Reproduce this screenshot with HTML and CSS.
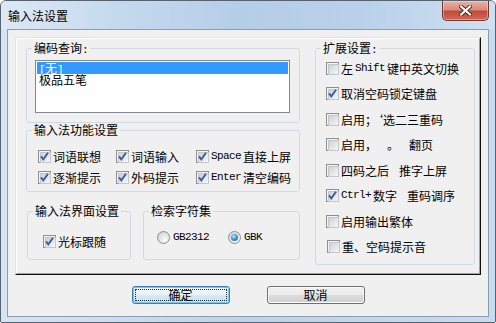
FILE: index.html
```html
<!DOCTYPE html>
<html lang="zh-CN">
<head>
<meta charset="utf-8">
<title>输入法设置</title>
<link rel="stylesheet" href="styles.css">
</head>
<body>
<div class="window">
  <div class="titlebar">
    <span class="title">输入法设置</span>
    <div class="close">
      <svg width="13" height="11" viewBox="0 0 13 11"><path d="M2 1.5 L11 9.5 M11 1.5 L2 9.5" stroke="#5a2118" stroke-width="4" stroke-linecap="square"/><path d="M2 1.5 L11 9.5 M11 1.5 L2 9.5" stroke="#fff" stroke-width="2.2" stroke-linecap="square"/></svg>
    </div>
  </div>
  <div class="client">
    <div class="panel">
      <div class="panel-inner">
        <div class="left">
          <fieldset class="grp grp-query">
            <legend>编码查询<span class="m">:</span></legend>
            <div class="query-body">
              <div class="listbox">
                <div class="item sel"><span class="m">[</span>无<span class="m">]</span></div>
                <div class="item">极品五笔</div>
              </div>
            </div>
          </fieldset>
          <fieldset class="grp grp-func">
            <legend>输入法功能设置</legend>
            <div class="func-grid">
              <label class="opt"><span class="cb on"><svg viewBox="0 0 13 13"><path d="M3 6.3 L5.3 9.3 L10 2.8"/></svg></span>词语联想</label>
              <label class="opt"><span class="cb on"><svg viewBox="0 0 13 13"><path d="M3 6.3 L5.3 9.3 L10 2.8"/></svg></span>词语输入</label>
              <label class="opt"><span class="cb on"><svg viewBox="0 0 13 13"><path d="M3 6.3 L5.3 9.3 L10 2.8"/></svg></span><span class="m">Space</span>直接上屏</label>
              <label class="opt"><span class="cb on"><svg viewBox="0 0 13 13"><path d="M3 6.3 L5.3 9.3 L10 2.8"/></svg></span>逐渐提示</label>
              <label class="opt"><span class="cb on"><svg viewBox="0 0 13 13"><path d="M3 6.3 L5.3 9.3 L10 2.8"/></svg></span>外码提示</label>
              <label class="opt"><span class="cb on"><svg viewBox="0 0 13 13"><path d="M3 6.3 L5.3 9.3 L10 2.8"/></svg></span><span class="m">Enter</span>清空编码</label>
            </div>
          </fieldset>
          <div class="bottom-row">
            <fieldset class="grp grp-ui">
              <legend>输入法界面设置</legend>
              <div class="ui-body">
                <label class="opt"><span class="cb on"><svg viewBox="0 0 13 13"><path d="M3 6.3 L5.3 9.3 L10 2.8"/></svg></span>光标跟随</label>
              </div>
            </fieldset>
            <fieldset class="grp grp-charset">
              <legend>检索字符集</legend>
              <div class="charset-body">
                <label class="ropt"><span class="rb"></span><span class="m">GB2312</span></label>
                <label class="ropt"><span class="rb on"></span><span class="m">GBK</span></label>
              </div>
            </fieldset>
          </div>
        </div>
        <fieldset class="grp grp-ext">
          <legend>扩展设置<span class="m">:</span></legend>
          <div class="ext-list">
            <label class="opt"><span class="cb"></span>左<span class="m">Shift</span>键中英文切换</label>
            <label class="opt"><span class="cb on"><svg viewBox="0 0 13 13"><path d="M3 6.3 L5.3 9.3 L10 2.8"/></svg></span>取消空码锁定键盘</label>
            <label class="opt"><span class="cb"></span>启用；‘选二三重码</label>
            <label class="opt"><span class="cb"></span>启用，<span class="m"> </span>。<span class="m"> </span>翻页</label>
            <label class="opt"><span class="cb"></span>四码之后<span class="m"> </span>推字上屏</label>
            <label class="opt"><span class="cb on"><svg viewBox="0 0 13 13"><path d="M3 6.3 L5.3 9.3 L10 2.8"/></svg></span><span class="m">Ctrl+</span>数字<span class="m"> </span>重码调序</label>
            <label class="opt"><span class="cb"></span>启用输出繁体</label>
            <label class="opt shift1"><span class="cb"></span>重、空码提示音</label>
          </div>
        </fieldset>
      </div>
    </div>
    <div class="buttons">
      <button class="btn btn-default"><span class="focus">确定</span></button>
      <button class="btn"><span class="plain">取消</span></button>
    </div>
  </div>
</div>
</body>
</html>
```

FILE: styles.css
```css
* { box-sizing: border-box; }
html, body { margin: 0; padding: 0; }
body {
  width: 496px;
  height: 323px;
  overflow: hidden;
  font-family: "Noto Sans CJK SC", "Noto Sans", sans-serif;
  font-size: 12px;
  color: #000;
  background: #ffffff;
}
.m {
  font-family: "Liberation Mono", "Courier New", monospace;
  font-size: 11px;
  letter-spacing: -0.6px;
  white-space: pre;
}
.window {
  width: 496px;
  height: 323px;
  border: 1px solid #56626f;
  border-radius: 6px 6px 2px 2px;
  background: linear-gradient(90deg, #d6e4f3 0%, #bdd4ec 50%, #c8dbef 100%);
  display: flex;
  flex-direction: column;
  overflow: hidden;
}
.titlebar {
  height: 28px;
  flex: none;
  display: flex;
  align-items: flex-start;
  background: linear-gradient(90deg, #dde9f5 0%, #c6daee 22%, #b5cee8 48%, #b8d0ea 72%, #cfe0f1 100%);
}
.title {
  padding: 8px 0 0 7px;
  line-height: 13px;
}
.close {
  margin-left: auto;
  margin-right: 6px;
  width: 47px;
  height: 20px;
  border: 1px solid #6b3a33;
  border-top: none;
  border-radius: 0 0 5px 5px;
  background: linear-gradient(#e9b2a6 0%, #db8b7a 45%, #c6493a 55%, #cf6a57 100%);
  box-shadow: inset 0 0 0 1px rgba(255, 255, 255, 0.35);
  display: flex;
  align-items: center;
  justify-content: center;
}
.client {
  margin: 0 6px;
  height: 288px;
  flex: none;
  border: 1px solid #8c9db1;
  background: #f0f0f0;
  padding: 7px 7px 0;
  display: flex;
  flex-direction: column;
}
.panel {
  height: 238px;
  flex: none;
  border: 1px solid;
  border-color: #e3e3e3 #101010 #101010 #e3e3e3;
}
.panel-inner {
  height: 100%;
  border: 1px solid;
  border-color: #ffffff #a0a0a0 #a0a0a0 #ffffff;
  padding: 2px 4px 0 9px;
  display: grid;
  grid-template-columns: 274px 160px;
  column-gap: 15px;
  align-items: start;
}
.left {
  display: flex;
  flex-direction: column;
}
fieldset.grp {
  margin: 0;
  padding: 0;
  min-width: 0;
  border: 1px solid #d0dae2;
  border-radius: 3px;
}
fieldset.grp legend {
  margin-left: 5px;
  padding: 0 2px;
  height: 14px;
  line-height: 14px;
}
.query-body {
  padding: 5px 9px 9px 8px;
}
.listbox {
  height: 53px;
  border: 1px solid #828790;
  background: #ffffff;
  padding: 1px;
}
.item {
  height: 12px;
  line-height: 12px;
  padding-left: 2px;
  white-space: nowrap;
}
.item.sel {
  background: #3399ff;
  color: #ffffff;
}
.grp-func { margin-top: 5px; }
.func-grid {
  display: grid;
  grid-template-columns: 78px 80px auto;
  row-gap: 8px;
  padding: 13px 0 7px 11px;
}
.opt {
  display: flex;
  align-items: center;
  gap: 2px;
  height: 13px;
  line-height: 13px;
  white-space: nowrap;
}
.cb {
  position: relative;
  flex: none;
  width: 13px;
  height: 13px;
  border: 1px solid #8e8f8f;
  background: #f4f4f4;
  padding: 1px;
}
.cb::before {
  content: "";
  display: block;
  width: 9px;
  height: 9px;
  border: 1px solid #c3c6ca;
  background: linear-gradient(135deg, #cdd1d6 0%, #e4e6e8 55%, #f7f7f7 100%);
}
.cb svg {
  position: absolute;
  left: -1px;
  top: -1px;
  width: 13px;
  height: 13px;
}
.cb svg path {
  fill: none;
  stroke: #3f5a9e;
  stroke-width: 1.9;
}
.bottom-row {
  display: flex;
  gap: 12px;
  margin-top: 12px;
  padding-left: 1px;
}
.grp-ui { width: 104px; flex: none; }
.grp-charset { flex: 1; }
.ui-body { padding: 17px 0 11px 15px; }
.charset-body {
  display: flex;
  padding: 13px 0 0 13px;
}
.ropt {
  display: flex;
  align-items: center;
  gap: 3px;
  height: 13px;
  line-height: 13px;
  width: 75px;
}
.rb {
  position: relative;
  flex: none;
  width: 13px;
  height: 13px;
  border-radius: 50%;
  border: 1px solid #8e8f8f;
  background: radial-gradient(circle at 65% 70%, #fafafa 0%, #e2e2e2 55%, #c9cbcd 100%);
}
.rb.on::after {
  content: "";
  position: absolute;
  left: 2px;
  top: 2px;
  width: 7px;
  height: 7px;
  border-radius: 50%;
  background: radial-gradient(circle at 40% 35%, #bfeaff 0%, #3f9be0 45%, #17589c 100%);
}
.ext-list {
  height: 209px;
  display: flex;
  flex-direction: column;
  justify-content: space-between;
  padding: 7px 0 11px 10px;
}
.shift1 { margin-left: 1px; }
.buttons {
  display: flex;
  justify-content: center;
  gap: 37px;
  margin-top: 11px;
}
.btn {
  width: 98px;
  height: 18px;
  padding: 0;
  font: inherit;
  color: #000;
  border: 1px solid #707070;
  border-radius: 3px;
  background: linear-gradient(#f2f2f2 0%, #ebebeb 50%, #dddddd 50%, #cfcfcf 100%);
  box-shadow: inset 0 0 0 1px #fbfbfb;
}
.btn-default {
  border-color: #3c7fb1;
  background: linear-gradient(#f4f9fd 0%, #e6f2fa 50%, #d3eaf7 50%, #c3e1f3 100%);
  box-shadow: inset 0 0 0 1px #6ec9f2;
}
.focus {
  display: block;
  margin: 2px;
  height: 12px;
  border: 1px dotted #222;
  line-height: 10px;
}
.plain {
  display: block;
  line-height: 16px;
}
```
